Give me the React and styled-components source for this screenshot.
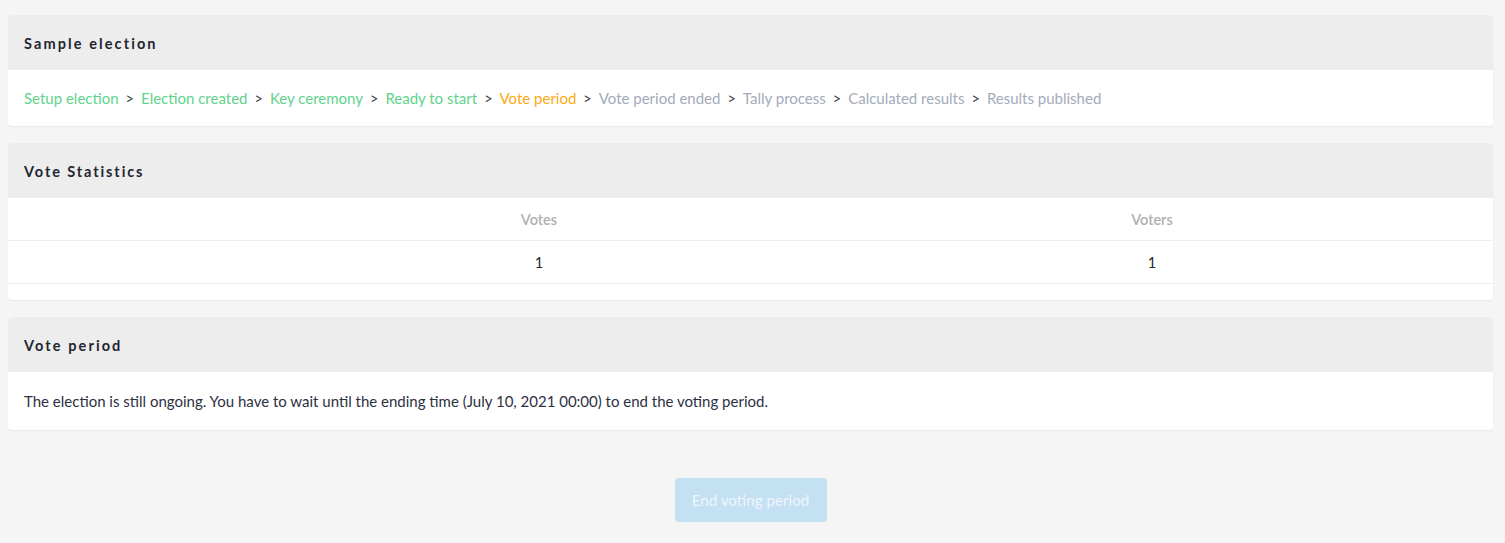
import React from "react";
import styled, { createGlobalStyle } from "styled-components";

const Global = createGlobalStyle`
  html, body { margin: 0; padding: 0; background: #f5f5f5; }
  body { font-family: "Source Sans Pro", Lato, "Liberation Sans", sans-serif; color: #2d3142; }
  * { box-sizing: border-box; }
`;

const Page = styled.div`
  padding: 15px 12px 21px 8px;
  display: flex;
  flex-direction: column;
  gap: 17px;
`;

const Card = styled.section`
  background: #fff;
  border-radius: 4px;
  box-shadow: 0 1px 2px rgba(0, 0, 0, 0.06);
  overflow: hidden;
`;

const CardHeader = styled.header`
  background: #ededed;
  height: 55px;
  display: flex;
  align-items: center;
  padding: 1px 16px 0;
  font-family: Lato, sans-serif;
  font-weight: 700;
  font-size: 14.5px;
  letter-spacing: ${(p) => p.$ls || "2.1px"};
  color: #23262f;
`;

const CardBody = styled.div`
  padding: 0 16px;
  height: ${(p) => p.$h || "56px"};
  display: flex;
  align-items: center;
  font-family: Lato, sans-serif;
  font-size: 15px;
  color: #2d3142;
`;

const Steps = styled.div`
  display: flex;
  align-items: center;
  gap: 7px;
  font-family: Lato, sans-serif;
  font-size: 15px;
`;

const Step = styled.span`
  color: ${(p) =>
    p.$state === "done" ? "#5fd38d" : p.$state === "current" ? "#fbaa15" : "#a3abbb"};
`;

const Sep = styled.span`
  color: #3a3d46;
  font-size: 14.5px;
`;

const Table = styled.div`
  display: grid;
  grid-template-columns: 259px 544px 1fr;
  padding-bottom: 16px;
`;

const Cell = styled.div`
  height: 43px;
  display: flex;
  align-items: center;
  justify-content: center;
  border-bottom: 1px solid #eeeeee;
  font-family: Lato, sans-serif;
  font-size: 14.5px;
  color: ${(p) => (p.$head ? "#b0b0b0" : "#22252d")};
  font-weight: ${(p) => (p.$head ? 600 : 400)};
`;

const Actions = styled.div`
  display: flex;
  justify-content: center;
  padding-top: 31px;
`;

const Button = styled.button`
  width: 152px;
  height: 44px;
  border: none;
  border-radius: 4px;
  background: #c4e0f3;
  color: #eef6fc;
  font-family: Lato, sans-serif;
  font-size: 15.2px;
  cursor: not-allowed;
`;

const steps = [
  ["Setup election", "done"],
  ["Election created", "done"],
  ["Key ceremony", "done"],
  ["Ready to start", "done"],
  ["Vote period", "current"],
  ["Vote period ended", "todo"],
  ["Tally process", "todo"],
  ["Calculated results", "todo"],
  ["Results published", "todo"],
];

export default function App() {
  return (
    <>
      <Global />
      <Page>
        <Card>
          <CardHeader>Sample election</CardHeader>
          <CardBody>
            <Steps>
              {steps.map(([label, state], i) => (
                <React.Fragment key={label}>
                  {i > 0 && <Sep>&gt;</Sep>}
                  <Step $state={state}>{label}</Step>
                </React.Fragment>
              ))}
            </Steps>
          </CardBody>
        </Card>
        <Card>
          <CardHeader $ls="1.9px">Vote Statistics</CardHeader>
          <Table>
            <Cell $head />
            <Cell $head>Votes</Cell>
            <Cell $head>Voters</Cell>
            <Cell />
            <Cell>1</Cell>
            <Cell>1</Cell>
          </Table>
        </Card>
        <Card>
          <CardHeader>Vote period</CardHeader>
          <CardBody $h="58px">
            The election is still ongoing. You have to wait until the ending time (July 10, 2021 00:00) to end the voting period.
          </CardBody>
        </Card>
        <Actions>
          <Button disabled>End voting period</Button>
        </Actions>
      </Page>
    </>
  );
}
